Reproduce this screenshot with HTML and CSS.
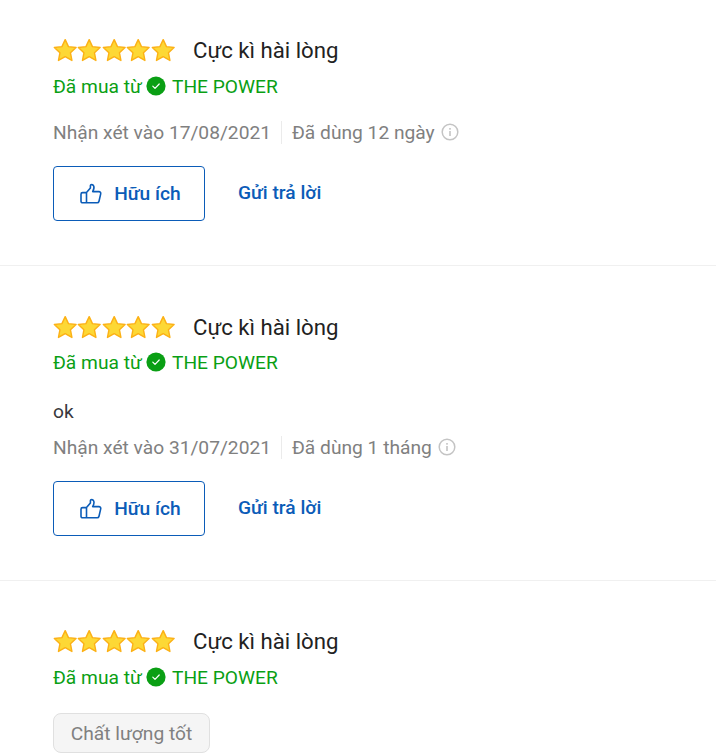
FILE: index.html
```html
<!DOCTYPE html>
<html lang="vi">
<head>
<meta charset="utf-8">
<title>Nhận xét</title>
<link rel="stylesheet" href="styles.css">
</head>
<body>
<svg class="defs" width="0" height="0" aria-hidden="true">
  <defs>
    <symbol id="star" viewBox="0 0 24 24"><path d="M12 1.6l3.2 6.9 7.5.9-5.5 5.2 1.4 7.5L12 18.4l-6.6 3.7 1.4-7.5-5.5-5.2 7.5-.9z" fill="#fdd835" stroke="#fcb116" stroke-width="1.4" stroke-linejoin="round"/></symbol>
    <symbol id="check" viewBox="0 0 20 20"><circle cx="10" cy="10" r="9.6" fill="#0a9f14"/><path d="M6.800 10.200l2.200 2.200 4.200-4.400" fill="none" stroke="#fff" stroke-width="1.200" stroke-linecap="round" stroke-linejoin="round"/></symbol>
    <symbol id="info" viewBox="0 0 18 18"><circle cx="9" cy="9" r="7.8" fill="none" stroke="#c4c4c4" stroke-width="1.5"/><rect x="8.2" y="8" width="1.6" height="5" fill="#c4c4c4"/><rect x="8.2" y="5" width="1.6" height="1.7" fill="#c4c4c4"/></symbol>
    <symbol id="thumb" viewBox="0 0 24 24"><path d="M7.5 10.6v10.2M2 12.2c0-.9.7-1.6 1.6-1.6h3.9l3.9-4.7V3.6c0-1.1 2.5-1.6 3.3.4.7 1.7-.1 4-1 5.600h6.200c1.200 0 2.100 1.100 1.800 2.300l-1.700 7.300c-.2.900-1 1.600-1.900 1.600H3.600c-.9 0-1.600-.7-1.600-1.600z" fill="none" stroke="#0b5cb8" stroke-width="1.600" stroke-linejoin="round" stroke-linecap="round"/></symbol>
  </defs>
</svg>

<main class="reviews">
  <article class="review">
    <div class="head">
      <div class="stars">
        <svg><use href="#star"/></svg><svg><use href="#star"/></svg><svg><use href="#star"/></svg><svg><use href="#star"/></svg><svg><use href="#star"/></svg>
      </div>
      <h3 class="title">Cực kì hài lòng</h3>
    </div>
    <div class="bought">Đã mua từ <svg class="check"><use href="#check"/></svg> THE POWER</div>
    <div class="meta">
      <span class="date">Nhận xét vào 17/08/2021</span>
      <span class="used">Đã dùng 12 ngày</span>
      <svg class="info"><use href="#info"/></svg>
    </div>
    <div class="actions">
      <button class="helpful" type="button"><svg class="thumb"><use href="#thumb"/></svg>Hữu ích</button>
      <a class="reply" href="#">Gửi trả lời</a>
    </div>
  </article>

  <article class="review">
    <div class="head">
      <div class="stars">
        <svg><use href="#star"/></svg><svg><use href="#star"/></svg><svg><use href="#star"/></svg><svg><use href="#star"/></svg><svg><use href="#star"/></svg>
      </div>
      <h3 class="title">Cực kì hài lòng</h3>
    </div>
    <div class="bought">Đã mua từ <svg class="check"><use href="#check"/></svg> THE POWER</div>
    <p class="content">ok</p>
    <div class="meta meta-after-content">
      <span class="date">Nhận xét vào 31/07/2021</span>
      <span class="used">Đã dùng 1 tháng</span>
      <svg class="info"><use href="#info"/></svg>
    </div>
    <div class="actions">
      <button class="helpful" type="button"><svg class="thumb"><use href="#thumb"/></svg>Hữu ích</button>
      <a class="reply" href="#">Gửi trả lời</a>
    </div>
  </article>

  <article class="review">
    <div class="head">
      <div class="stars">
        <svg><use href="#star"/></svg><svg><use href="#star"/></svg><svg><use href="#star"/></svg><svg><use href="#star"/></svg><svg><use href="#star"/></svg>
      </div>
      <h3 class="title">Cực kì hài lòng</h3>
    </div>
    <div class="bought">Đã mua từ <svg class="check"><use href="#check"/></svg> THE POWER</div>
    <div class="tags"><span class="tag">Chất lượng tốt</span></div>
  </article>
</main>
</body>
</html>
```

FILE: styles.css
```css
* { box-sizing: border-box; }

html, body {
  margin: 0;
  height: 755px;
  overflow: hidden;
  background: #fff;
}

body {
  font-family: Roboto, "Noto Sans", sans-serif;
  color: #242424;
}

.defs { position: absolute; }

.review {
  padding: 46px 16px 0 53px;
  border-bottom: 1px solid #f0f0f0;
  height: 315px;
}

.review:first-child {
  height: 266px;
  padding-top: 36px;
}

.review:nth-child(2) .head {
  margin-top: 1px;
  margin-bottom: -1px;
}

.review:last-child {
  border-bottom: 0;
}

.head {
  display: flex;
  align-items: center;
  height: 28px;
}

.stars {
  display: flex;
  width: 122px;
  margin-right: 18px;
}

.stars svg {
  width: 24.4px;
  height: 24.4px;
  flex: none;
}

.title {
  margin: 0;
  font-size: 22.2px;
  line-height: 28px;
  font-weight: 400;
  color: #222;
}

.bought {
  display: flex;
  align-items: center;
  height: 24px;
  margin-top: 10px;
  font-size: 19.2px;
  color: #0a9f14;
  white-space: pre;
}

.check {
  width: 20px;
  height: 20px;
  margin: 0 2px 0 -1px;
}

.content {
  margin: 26px 0 0;
  font-size: 19.2px;
  line-height: 24px;
  color: #38383d;
}

.meta {
  display: flex;
  align-items: center;
  height: 24px;
  margin-top: 22px;
  font-size: 19.2px;
  color: #808080;
}

.meta-after-content { margin-top: 11px; }

.date {
  padding-right: 10px;
  border-right: 1px solid #ebebeb;
}

.used { padding-left: 10px; }

.info {
  width: 18px;
  height: 18px;
  margin-left: 6px;
}

.actions {
  display: flex;
  align-items: flex-start;
  margin-top: 22px;
}

.helpful {
  display: flex;
  align-items: center;
  justify-content: center;
  width: 152px;
  height: 55px;
  padding: 0 0 0 2px;
  border: 1px solid #0b5cb8;
  border-radius: 4px;
  background: #fff;
  color: #0b5cb8;
  font: 500 19.2px Roboto, sans-serif;
}

.thumb {
  width: 24px;
  height: 24px;
  margin-right: 11px;
}

.reply {
  margin: 15px 0 0 33px;
  font-size: 19.2px;
  line-height: 24px;
  font-weight: 500;
  color: #0b5cb8;
  text-decoration: none;
}

.tags { margin-top: 24px; }

.tag {
  display: inline-block;
  width: 157px;
  height: 40px;
  border: 1px solid #e0e0e0;
  border-radius: 8px;
  background: #f5f5f5;
  color: #808080;
  font-size: 19.2px;
  line-height: 40px;
  text-align: center;
}
```
